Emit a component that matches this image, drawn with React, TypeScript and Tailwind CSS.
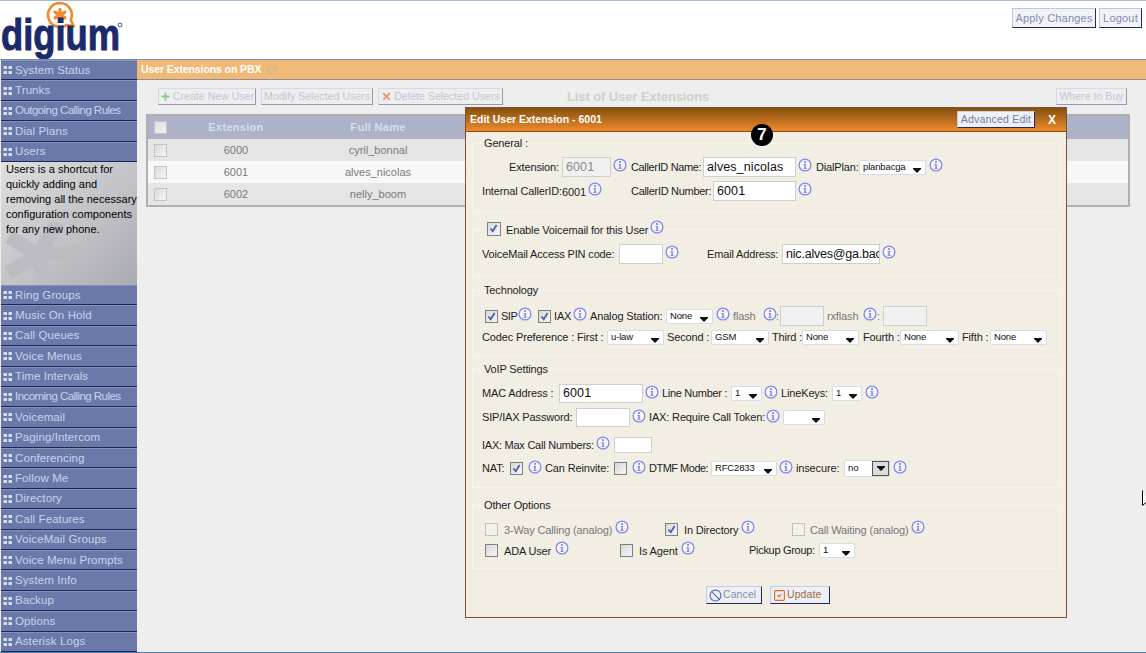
import { Ban, RefreshCw, SquareCheck, Plus, X } from "lucide-react";
import type { ReactNode } from "react";

const topMenu = ["System Status", "Trunks", "Outgoing Calling Rules", "Dial Plans", "Users"];
const bottomMenu = [
  "Ring Groups",
  "Music On Hold",
  "Call Queues",
  "Voice Menus",
  "Time Intervals",
  "Incoming Calling Rules",
  "Voicemail",
  "Paging/Intercom",
  "Conferencing",
  "Follow Me",
  "Directory",
  "Call Features",
  "VoiceMail Groups",
  "Voice Menu Prompts",
  "System Info",
  "Backup",
  "Options",
  "Asterisk Logs",
];

const users = [
  { ext: "6000", name: "cyril_bonnal", bg: "bg-[#e5e5e5]" },
  { ext: "6001", name: "alves_nicolas", bg: "bg-[#f7f7f7]" },
  { ext: "6002", name: "nelly_boom", bg: "bg-[#e5e5e5]" },
];

const Logo = () => (
  <svg width="125" height="58" viewBox="0 0 125 58" className="shrink-0">
    <path
      d="M60 2a12 12 0 1 0 6.5 22.1l7 1-2.7-6.3A12 12 0 0 0 60 2z"
      fill="#fff"
      stroke="#f08a2e"
      strokeWidth="2.6"
    />
    <g stroke="#f08a2e" strokeWidth="3.4" strokeLinecap="round">
      <line x1="60" y1="8.5" x2="60" y2="19.5" />
      <line x1="55.2" y1="11.2" x2="64.8" y2="16.8" />
      <line x1="64.8" y1="11.2" x2="55.2" y2="16.8" />
    </g>
    <text
      x="1"
      y="49"
      fontSize="44"
      fontWeight="700"
      fontFamily="'Liberation Sans', Arial, sans-serif"
      fill="#1c2a6b"
      stroke="#1c2a6b"
      strokeWidth="1"
      textLength="119"
      lengthAdjust="spacingAndGlyphs"
    >
      digium
    </text>
    <circle cx="120" cy="24" r="2" fill="none" stroke="#1c2a6b" strokeWidth="0.8" />
  </svg>
);

const MenuRow = ({ label }: { label: string }) => (
  <div className="h-[20.4px] flex items-center bg-[#6b79aa] border-b border-b-[#1b2756] border-t border-t-[#8792bb] pl-[2px] text-[#c9d3ec] text-[11.5px] whitespace-nowrap">
    <svg width="10" height="8" viewBox="0 0 10 8" className="mr-[2px] shrink-0">
      <g fill="#d8dff0">
        <rect x="0.5" y="0" width="3.5" height="3" rx="0.6" />
        <rect x="5.5" y="0" width="3.5" height="3" rx="0.6" />
        <rect x="0.5" y="5" width="3.5" height="3" rx="0.6" />
        <rect x="5.5" y="5" width="3.5" height="3" rx="0.6" />
      </g>
    </svg>
    <span className={label.endsWith("Calling Rules") ? "tracking-[-0.55px]" : "tracking-[0.1px]"}>{label}</span>
  </div>
);

const Watermark = () => (
  <svg width="90" height="63" viewBox="0 0 90 63" className="absolute left-0 top-[60px]">
    <g stroke="#bcbcc2" strokeWidth="14">
      <line x1="37" y1="33" x2="45" y2="68" />
      <line x1="37" y1="33" x2="57" y2="0" />
      <line x1="37" y1="33" x2="76" y2="31" />
      <line x1="37" y1="33" x2="8" y2="15" />
      <line x1="37" y1="33" x2="7" y2="51" />
    </g>
  </svg>
);

const Sidebar = () => (
  <div className="w-[136px] ml-[1px] shrink-0 flex flex-col">
    {topMenu.map((m) => (
      <MenuRow key={m} label={m} />
    ))}
    <div className="relative h-[123px] overflow-hidden bg-gradient-to-br from-[#e0e0e0] to-[#aaaab2] pl-[5px] text-[11px] leading-[15px] text-black whitespace-nowrap">
      <Watermark />
      <p className="relative">
        Users is a shortcut for
        <br />
        quickly adding and
        <br />
        removing all the necessary
        <br />
        configuration components
        <br />
        for any new phone.
      </p>
    </div>
    {bottomMenu.map((m) => (
      <MenuRow key={m} label={m} />
    ))}
  </div>
);

const TopButton = ({ children, className = "" }: { children: ReactNode; className?: string }) => (
  <button
    className={`h-[20px] flex items-center justify-center bg-[#f2f2f4] border border-[#b9c6e6] border-r-[#1f2a5c] border-b-[#1f2a5c] text-[#7f8db5] text-[11px] tracking-[0.2px] whitespace-nowrap ${className}`}
  >
    {children}
  </button>
);

const DimButton = ({ children, className = "" }: { children: ReactNode; className?: string }) => (
  <button
    className={`h-[17px] flex items-center justify-center gap-[2px] bg-[#eeeeee] border border-[#d3d9ea] border-r-[#9299b4] border-b-[#9299b4] text-[#c2c6d6] text-[10.5px] tracking-[0.05px] whitespace-nowrap ${className}`}
  >
    {children}
  </button>
);

const TableCheck = () => (
  <span className="block w-[13px] h-[13px] border border-[#c4c4c4] bg-gradient-to-br from-[#dcdcdc] to-[#f4f4f4]" />
);

const InfoIcon = ({ className = "" }: { className?: string }) => (
  <svg width="14" height="14" viewBox="0 0 14 14" className={`shrink-0 mb-[4px] ${className}`}>
    <circle cx="7" cy="7" r="5.9" fill="#f6f4f8" stroke="#8189ea" strokeWidth="1.3" />
    <circle cx="7" cy="4" r="1" fill="#6d76e4" />
    <path d="M5.6 6h2.1v4h1v.8H5.4V10h1V6.8h-.8z" fill="#6d76e4" />
  </svg>
);

const Label = ({ children, className = "" }: { children: ReactNode; className?: string }) => (
  <span className={`shrink-0 whitespace-nowrap ${className}`}>{children}</span>
);

const TextBox = ({
  value = "",
  className = "",
  disabled = false,
  narrow = false,
}: {
  value?: string;
  className?: string;
  disabled?: boolean;
  narrow?: boolean;
}) => (
  <span
    className={`shrink-0 overflow-hidden whitespace-nowrap flex items-center border border-[#cfcfcf] pl-[3px] text-[12.5px] ${
      narrow ? "tracking-[-0.2px]" : "tracking-[0.1px]"
    } ${disabled ? "bg-[#f0f0f0] text-[#8a8a8a]" : "bg-white text-[#111]"} ${className}`}
  >
    {value}
  </span>
);

const Arrow = () => (
  <svg width="8" height="5" viewBox="0 0 8 5" className="block">
    <path d="M0 0h8v1L4 5 0 1z" fill="#111" />
  </svg>
);

const Dropdown = ({
  value = "",
  className = "",
  focused = false,
}: {
  value?: string;
  className?: string;
  focused?: boolean;
}) => (
  <span
    className={`shrink-0 relative flex items-center bg-white border border-[#d8dbe4] rounded-[2px] pl-[3px] text-[9.5px] text-[#111] whitespace-nowrap ${
      focused ? "h-[17px] border-[#bdbdbd]" : "h-[15px]"
    } ${className}`}
  >
    {value}
    {focused ? (
      <span className="absolute right-0 top-0 bottom-0 w-[17px] flex items-center justify-center bg-[#dcdcdc] border border-[#555]">
        <Arrow />
      </span>
    ) : (
      <span className="absolute right-[4px] bottom-[1px]">
        <Arrow />
      </span>
    )}
  </span>
);

const Check = ({
  checked = false,
  disabled = false,
  className = "",
}: {
  checked?: boolean;
  disabled?: boolean;
  className?: string;
}) => (
  <span
    className={`shrink-0 block w-[13px] h-[13px] border ${
      disabled ? "border-[#c0c0c0] bg-[#f3f1ec]" : "border-[#7f7f7f] bg-gradient-to-br from-[#d8d8d8] to-[#f6f6f6]"
    } ${className}`}
  >
    {checked && (
      <svg width="11" height="11" viewBox="0 0 11 11" className="block">
        <path d="M2.5 5.5l2.2 2.7L8.6 2" fill="none" stroke="#4c5aa8" strokeWidth="1.7" />
      </svg>
    )}
  </span>
);

const Section = ({
  legend,
  className = "",
  children,
}: {
  legend: ReactNode;
  className?: string;
  children: ReactNode;
}) => (
  <fieldset className={`mx-[6px] border border-[#f7f5ef] pl-[9px] ${className}`}>
    <legend className="ml-[2px] h-[14px] flex items-center whitespace-nowrap">{legend}</legend>
    {children}
  </fieldset>
);

const EditModal = () => (
  <div className="absolute left-[465px] top-[106px] w-[602px] h-[511px] flex flex-col border border-[#7d5230] bg-[#f2eee4] text-[11px] tracking-[-0.15px] text-[#1d1d1d]">
    <div className="h-[24px] shrink-0 flex items-center bg-gradient-to-b from-[#86500f] to-[#f08a2c] border-b border-b-[#8a4c12] pl-[4px] text-white font-bold text-[10.5px] tracking-normal">
      Edit User Extension - 6001
      <span className="ml-auto w-[78px] h-[17px] flex items-center justify-center bg-[#eef0f6] border border-[#c6d0ea] border-r-[#1f2a5c] border-b-[#1f2a5c] text-[#6f7ca4] font-normal text-[10.5px] tracking-[0.2px]">
        Advanced Edit
      </span>
      <span className="ml-[13px] mr-[10px] text-[12px] font-bold">X</span>
    </div>

    <Section legend="General :" className="mt-[4px] h-[76px]">
      <div className="flex items-center h-[20px] mt-[7px]">
        <Label className="ml-[27px] w-[49px]">Extension:</Label>
        <TextBox disabled value="6001" className="ml-[4px] w-[49px] h-[20px]" />
        <InfoIcon className="ml-[2px]" />
        <Label className="ml-[4px] w-[69px] tracking-[-0.35px]">CallerID Name:</Label>
        <TextBox value="alves_nicolas" className="ml-[3px] w-[93px] h-[20px]" />
        <InfoIcon className="ml-[2px]" />
        <Label className="ml-[4px] w-[40px]">DialPlan:</Label>
        <Dropdown value="planbacga" className="ml-[3px] w-[67px]" />
        <InfoIcon className="ml-[3px]" />
      </div>
      <div className="flex items-center h-[20px] mt-[4px]">
        <Label className="w-[76px]">Internal CallerID:</Label>
        <Label className="ml-[4px] w-[24px] pt-[3px]">6001</Label>
        <InfoIcon className="ml-[2px]" />
        <Label className="ml-[29px] w-[79px] tracking-[-0.3px]">CallerID Number:</Label>
        <TextBox value="6001" className="ml-[3px] w-[83px] h-[20px]" />
        <InfoIcon className="ml-[2px]" />
      </div>
    </Section>

    <Section
      legend={
        <span className="flex items-center">
          <Check checked className="ml-[3px] w-[14px] h-[14px]" />
          <span className="ml-[5px] pt-[3px]">Enable Voicemail for this User</span>
          <InfoIcon className="ml-[2px]" />
        </span>
      }
      className="mt-[10px] h-[55px]"
    >
      <div className="flex items-center h-[20px] mt-[8px]">
        <Label className="w-[133px]">VoiceMail Access PIN code:</Label>
        <TextBox className="ml-[4px] w-[44px] h-[20px]" />
        <InfoIcon className="ml-[2px]" />
        <Label className="ml-[28px] w-[72px]">Email Address:</Label>
        <TextBox narrow value="nic.alves@ga.bac" className="ml-[3px] w-[98px] h-[20px]" />
        <InfoIcon className="ml-[2px]" />
      </div>
    </Section>

    <Section legend="Technology" className="mt-[6px] h-[73px]">
      <div className="flex items-center h-[20px] mt-[9px]">
        <Check checked className="ml-[3px]" />
        <Label className="ml-[3px] w-[15px] tracking-[-0.5px]">SIP</Label>
        <InfoIcon className="ml-[2px]" />
        <Check checked className="ml-[6px]" />
        <Label className="ml-[3px] w-[17px]">IAX</Label>
        <InfoIcon className="ml-[2px]" />
        <Label className="ml-[3px] w-[73px]">Analog Station:</Label>
        <Dropdown value="None" className="ml-[3px] w-[47px]" />
        <InfoIcon className="ml-[3px]" />
        <Label className="ml-[3px] w-[24px] text-[#777]">flash</Label>
        <InfoIcon className="ml-[6px]" />
        <Label className="ml-[-1px] w-[4px] text-[#777]">:</Label>
        <TextBox disabled className="w-[44px] h-[20px]" />
        <Label className="ml-[3px] w-[34px] text-[#777]">rxflash</Label>
        <InfoIcon className="ml-[2px]" />
        <Label className="w-[6px] text-[#777]">:</Label>
        <TextBox disabled className="w-[44px] h-[20px]" />
      </div>
      <div className="flex items-center h-[16px] mt-[3px]">
        <Label className="w-[124px]">Codec Preference : First :</Label>
        <Dropdown value="u-law" className="ml-[1px] w-[57px]" />
        <Label className="ml-[3px] w-[38px]">Second :</Label>
        <Dropdown value="GSM" className="ml-[6px] w-[58px]" />
        <Label className="ml-[3px] w-[30px]">Third :</Label>
        <Dropdown value="None" className="w-[57px]" />
        <Label className="ml-[4px] w-[36px]">Fourth :</Label>
        <Dropdown value="None" className="ml-[1px] w-[59px]" />
        <Label className="ml-[3px] w-[27px]">Fifth :</Label>
        <Dropdown value="None" className="ml-[1px] w-[57px]" />
      </div>
    </Section>

    <Section legend="VoIP Settings" className="mt-[6px] h-[126px]">
      <div className="flex items-center h-[19px] mt-[8px]">
        <Label className="w-[74px]">MAC Address :</Label>
        <TextBox value="6001" className="ml-[3px] w-[84px] h-[19px]" />
        <InfoIcon className="ml-[2px]" />
        <Label className="ml-[3px] w-[65px] tracking-[-0.3px]">Line Number :</Label>
        <Dropdown value="1" className="ml-[4px] w-[31px]" />
        <InfoIcon className="ml-[2px]" />
        <Label className="ml-[3px] w-[48px]">LineKeys:</Label>
        <Dropdown value="1" className="ml-[3px] w-[30px]" />
        <InfoIcon className="ml-[3px]" />
      </div>
      <div className="flex items-center h-[19px] mt-[5px]">
        <Label className="w-[90px]">SIP/IAX Password:</Label>
        <TextBox className="ml-[4px] w-[54px] h-[19px]" />
        <InfoIcon className="ml-[2px]" />
        <Label className="ml-[3px] w-[113px]">IAX: Require Call Token:</Label>
        <InfoIcon className="ml-[4px]" />
        <Dropdown className="ml-[3px] w-[42px]" />
      </div>
      <div className="flex items-center h-[16px] mt-[10px]">
        <Label className="w-[112px] tracking-[-0.25px]">IAX: Max Call Numbers:</Label>
        <InfoIcon className="ml-[2px]" />
        <TextBox className="ml-[4px] w-[38px] h-[16px]" />
      </div>
      <div className="flex items-center h-[17px] mt-[7px]">
        <Label className="w-[22px]">NAT:</Label>
        <Check checked className="ml-[6px]" />
        <InfoIcon className="ml-[5px]" />
        <Label className="ml-[3px] w-[62px]">Can Reinvite:</Label>
        <Check className="ml-[7px]" />
        <InfoIcon className="ml-[5px]" />
        <Label className="ml-[3px] w-[59px] tracking-[-0.5px]">DTMF Mode:</Label>
        <Dropdown value="RFC2833" className="ml-[3px] w-[66px]" />
        <InfoIcon className="ml-[2px]" />
        <Label className="ml-[3px] w-[45px]">insecure:</Label>
        <Dropdown focused value="no" className="ml-[3px] w-[46px]" />
        <InfoIcon className="ml-[3px]" />
      </div>
    </Section>

    <Section legend="Other Options" className="mt-[10px] h-[71px]">
      <div className="flex items-center h-[14px] mt-[10px]">
        <Check disabled className="ml-[3px]" />
        <Label className="ml-[6px] w-[109px] pt-[2px] text-[#777]">3-Way Calling (analog)</Label>
        <InfoIcon className="ml-[2px]" />
        <Check checked className="ml-[36px]" />
        <Label className="ml-[6px] w-[54px] pt-[2px]">In Directory</Label>
        <InfoIcon className="ml-[3px]" />
        <Check disabled className="ml-[37px]" />
        <Label className="ml-[5px] w-[98px] pt-[2px] text-[#777]">Call Waiting (analog)</Label>
        <InfoIcon className="ml-[3px]" />
      </div>
      <div className="flex items-center h-[14px] mt-[7px]">
        <Check className="ml-[3px]" />
        <Label className="ml-[6px] w-[49px] pt-[2px]">ADA User</Label>
        <InfoIcon className="ml-[2px]" />
        <Check className="ml-[51px]" />
        <Label className="ml-[6px] w-[40px] pt-[2px]">Is Agent</Label>
        <InfoIcon className="ml-[2px]" />
        <Label className="ml-[54px] w-[66px] tracking-[-0.3px]">Pickup Group:</Label>
        <Dropdown value="1" className="ml-[4px] w-[36px]" />
      </div>
    </Section>

    <div className="mt-[17px] flex justify-center gap-[8px] ml-[4px]">
      <span className="w-[56px] h-[18px] flex items-center pl-[2px] gap-[1px] bg-[#efeff3] border border-[#c0cce8] border-r-[#1f2a5c] border-b-[#1f2a5c] text-[#8490ad] text-[10.5px] tracking-[0.1px]">
        <Ban size={13} color="#4f6cb0" strokeWidth={2} />
        Cancel
      </span>
      <span className="w-[60px] h-[18px] flex items-center pl-[2px] gap-[1px] bg-[#efeff3] border border-[#c0cce8] border-r-[#1f2a5c] border-b-[#1f2a5c] text-[#9a6a4a] text-[10.5px] tracking-[0.1px]">
        <SquareCheck size={13} color="#e0662c" strokeWidth={2} />
        Update
      </span>
    </div>
  </div>
);

export default function App() {
  return (
    <div className="relative w-[1146px] h-[653px] overflow-hidden flex flex-col bg-[#eeeeee] border-t border-t-[#a9bcd6] border-b border-b-[#4a7fae] font-['Liberation_Sans',Arial,sans-serif] text-[12px]">
      <header className="h-[59px] shrink-0 flex items-start justify-between bg-white border-b border-b-[#6f8fb8]">
        <Logo />
        <div className="flex gap-[3px] mt-[7px] mr-[4px]">
          <TopButton className="w-[84px]">Apply Changes</TopButton>
          <TopButton className="w-[43px]">Logout</TopButton>
        </div>
      </header>

      <div className="flex-1 flex min-h-0">
        <Sidebar />
        <main className="flex-1 min-w-0 flex flex-col">
          <div className="h-[20px] shrink-0 flex items-center gap-[6px] bg-[#f0ba76] border-b border-b-[#8f8f9a] pl-[4px] text-white text-[10.5px] font-bold tracking-[-0.1px]">
            User Extensions on PBX
            <RefreshCw size={10} color="#c9b89c" strokeWidth={2.5} />
          </div>
          <div className="h-[17px] flex items-center mt-[8px] pl-[21px] pr-[19px]">
            <DimButton className="w-[98px]">
              <Plus size={11} color="#8dc98d" strokeWidth={4} />
              Create New User
            </DimButton>
            <DimButton className="ml-[5px] w-[112px]">Modify Selected Users</DimButton>
            <DimButton className="ml-[5px] w-[125px]">
              <X size={11} color="#ee9a78" strokeWidth={4} />
              Delete Selected Users
            </DimButton>
            <span className="ml-[64px] text-[13px] leading-[17px] font-bold tracking-[-0.1px] text-[#cfcfcf] whitespace-nowrap">List of User Extensions</span>
            <DimButton className="ml-auto w-[71px]">Where to Buy</DimButton>
          </div>
          <div className="mt-[9px] ml-[9px] w-[984px] border-2 border-[#b0b0b0]">
            <div className="h-[23px] flex items-center bg-[#adb2c9] text-[#d8dcea] text-[11px] font-bold tracking-[0.3px]">
              <div className="w-[28px] pl-[6px]">
                <TableCheck />
              </div>
              <div className="w-[120px] text-center">Extension</div>
              <div className="w-[164px] text-center">Full Name</div>
            </div>
            {users.map((u) => (
              <div key={u.ext} className={`h-[22px] flex items-center text-[#7a7a7a] text-[11px] ${u.bg}`}>
                <div className="w-[28px] pl-[6px]">
                  <TableCheck />
                </div>
                <div className="w-[120px] text-center">{u.ext}</div>
                <div className="w-[164px] text-center">{u.name}</div>
                <span className="ml-auto mr-[61px] w-[30px] h-[15px] bg-[#eeeeee] border-r-2 border-r-[#8f8f8f]" />
              </div>
            ))}
          </div>
        </main>
      </div>

      <EditModal />

      <span className="absolute left-[751px] top-[123px] w-[22px] h-[22px] rounded-full bg-black flex items-center justify-center text-white font-bold text-[17px]">
        7
      </span>

      <svg width="12" height="18" viewBox="0 0 12 18" className="absolute left-[1142px] top-[489px]">
        <path d="M0.5 0.5v15l4-3.5 3 6" fill="#fff" stroke="#000" strokeWidth="1" />
      </svg>
    </div>
  );
}
